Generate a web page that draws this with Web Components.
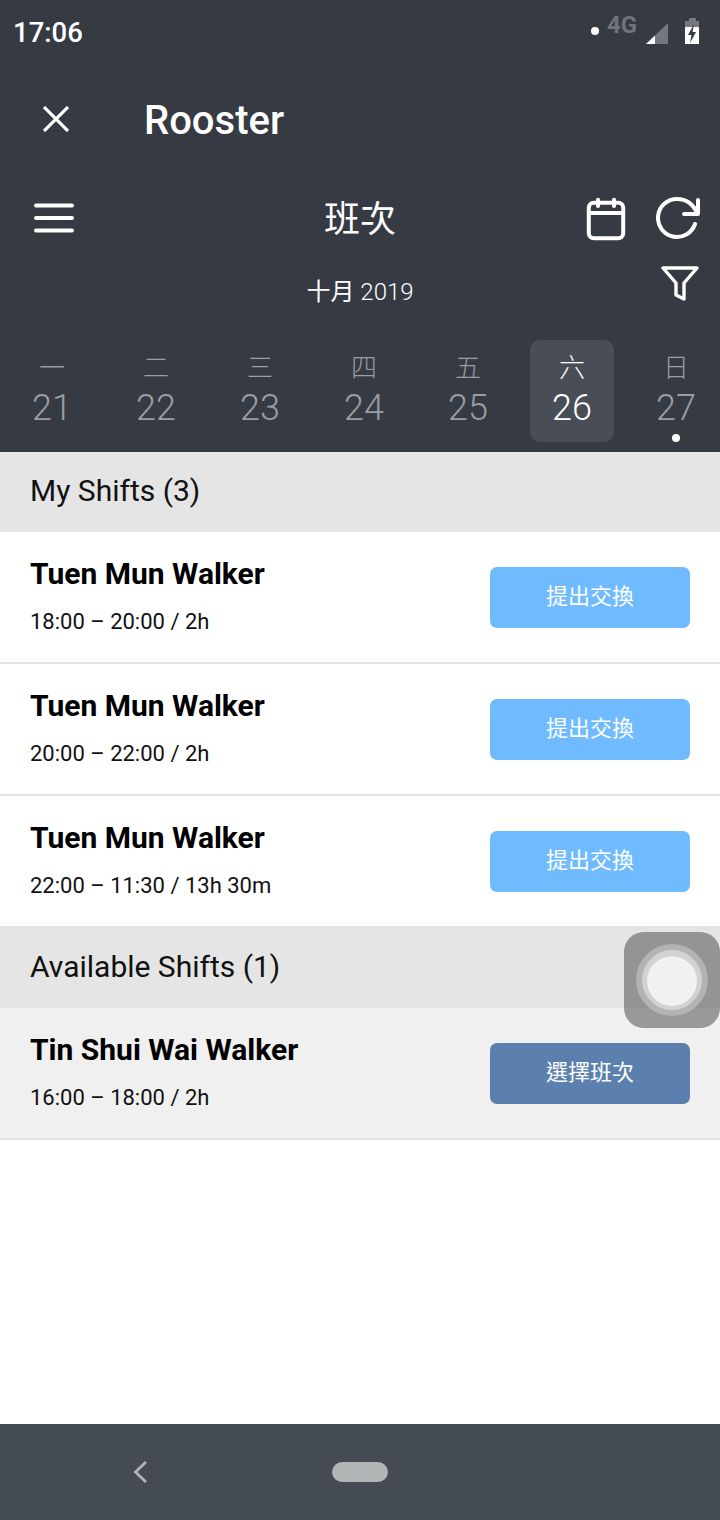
<!DOCTYPE html>
<html lang="zh-Hant"><head><meta charset="utf-8"><title>Rooster</title>
<style>
html,body{margin:0;padding:0;background:#fff}
body{width:720px;height:1520px;overflow:hidden;position:relative;font-family:Roboto,"Noto Sans CJK TC",sans-serif}
</style></head><body>
<app-shell>
  <status-bar></status-bar>
  <title-bar>Rooster</title-bar>
  <shift-header></shift-header>
  <section-head>My Shifts (3)</section-head>
  <shift-row name="Tuen Mun Walker" time="18:00 – 20:00 / 2h" action="提出交換"></shift-row>
  <shift-row name="Tuen Mun Walker" time="20:00 – 22:00 / 2h" action="提出交換"></shift-row>
  <shift-row name="Tuen Mun Walker" time="22:00 – 11:30 / 13h 30m" action="提出交換"></shift-row>
  <section-head>Available Shifts (1)</section-head>
  <shift-row available name="Tin Shui Wai Walker" time="16:00 – 18:00 / 2h" action="選擇班次"></shift-row>
  <nav-bar></nav-bar>
</app-shell>
<float-touch></float-touch>
<script>
function def(name, html, init){
  customElements.define(name, class extends HTMLElement{
    connectedCallback(){
      if(this.shadowRoot) return;
      const r=this.attachShadow({mode:'open'});
      r.innerHTML=typeof html==='function'?html(this):html;
      if(init) init(r,this);
    }
  });
}
def('app-shell',`<style>:host{display:flex;flex-direction:column;height:1520px}</style><slot></slot>`);
def('status-bar',`<style>
:host{display:flex;align-items:flex-start;justify-content:space-between;height:68px;background:#363a43;color:#fff;box-sizing:border-box;padding:17px 20px 0 13px}
.t{font:500 27.500px/32px Roboto,sans-serif}
.i{display:flex;position:relative;margin-top:-1px}
svg{display:block}
.g{position:absolute;left:19px;top:-4px;font:700 24px/26px Roboto,sans-serif;color:#6f737b}
</style><span class="t">17:06</span>
<div class="i"><svg width="112" height="32" viewBox="0 0 112 32">
<circle cx="7" cy="15" r="4" fill="#fff"/>
<path d="M58 28 L80 7 V28Z" fill="#747780"/><path d="M58 28 L67 19.500 V28Z" fill="#fff"/>
<path d="M101 5V2.500Q101 2 102 2H107Q108 2 108 2.500V5H111V28H97V5Z" fill="#747780"/>
<path d="M97 11H111V28H97Z" fill="#fff"/>
<path d="M106 8L100 19H103.500L102 27L108 16H104.500Z" fill="#363a43"/>
</svg><span class="g">4G</span></div>`);
def('title-bar',`<style>
:host{display:flex;align-items:center;height:105px;box-sizing:border-box;background:#363a43;border-bottom:1px solid #30343c}
svg{margin-left:43px;margin-bottom:3px;display:block;flex:none}
span{margin-left:75px;padding-top:2px;color:#fff;font:500 40px/44px Roboto,sans-serif}
</style><svg width="26" height="26" viewBox="0 0 26 26"><path d="M1 1L25 25M25 1L1 25" stroke="#fff" stroke-width="3.200" fill="none"/></svg><span><slot></slot></span>`);
def('shift-header',`<style>
:host{display:block;height:279px;background:#363a43;color:#fff;position:relative}
.top{display:flex;align-items:center;height:90px;padding:0 20px 0 34px;box-sizing:border-box}
.left{width:140px;display:flex;align-items:center}
.right{width:154px;display:flex;align-items:center;justify-content:flex-end;gap:29px;margin-top:2px}
h1{flex:1;margin:0;padding-top:4px;text-align:center;font:400 36px/44px Roboto,"Noto Sans CJK TC",sans-serif}
svg{display:block}
.mid{display:flex;align-items:center;justify-content:center;height:34px;margin-top:12px;position:relative;font:400 24px/34px Roboto,"Noto Sans CJK TC",sans-serif}
.mid b{font-weight:300}
.filter{position:absolute;right:21px;top:-9px}
.days{display:grid;grid-template-columns:repeat(7,104px);margin:31px 0 0 0}
</style>
<div class="top"><div class="left"><svg width="40" height="30" viewBox="0 0 40 30"><path d="M2 2.500H38M2 15H38M2 27.500H38" stroke="#fff" stroke-width="4" stroke-linecap="round" fill="none"/></svg></div>
<h1>班次</h1>
<div class="right"><svg width="42" height="44" viewBox="0 0 42 44" fill="none" stroke="#fff" stroke-width="4" stroke-linecap="round" stroke-linejoin="round"><rect x="3.800" y="5.800" width="34.400" height="35.400" rx="5"/><path d="M3.800 16H38.200M13 2.800V9M29 2.800V9"/></svg>
<svg width="44" height="44" viewBox="0 0 44 44" fill="none" stroke="#fff" stroke-width="4" stroke-linecap="round" stroke-linejoin="round"><path d="M42 3V17H28"/><path d="M41 16C37 7 30 2 21 2A19 19 0 1 0 39 27"/></svg></div></div>
<div class="mid"><span>十月 <b>2019</b></span>
<svg class="filter" width="38" height="36" viewBox="0 0 38 36" fill="none" stroke="#fff" stroke-width="3.400" stroke-linejoin="round" stroke-linecap="round"><path d="M2 2H36L23 17V33L15 29V17Z"/></svg></div>
<div class="days">
<day-cell w="一" d="21"></day-cell><day-cell w="二" d="22"></day-cell><day-cell w="三" d="23"></day-cell><day-cell w="四" d="24"></day-cell><day-cell w="五" d="25"></day-cell><day-cell w="六" d="26" active></day-cell><day-cell w="日" d="27" dot></day-cell>
</div>`);
def('day-cell',el=>`<style>
:host{display:flex;flex-direction:column;align-items:center;position:relative;height:102px;color:${el.hasAttribute('active')?'#fff':'#9a9da1'}}
.w{font:300 26px/28px Roboto,"Noto Sans CJK TC",sans-serif;margin-top:14px;position:relative}
.d{font:300 36px/44px Roboto,sans-serif;margin-top:4px;position:relative}
.bg{position:absolute;left:10px;top:0;width:84px;height:102px;border-radius:10px;background:#494d55}
.dot{position:absolute;left:50%;margin-left:-4px;top:94px;width:8px;height:8px;border-radius:50%;background:#fff}
</style>${el.hasAttribute('active')?'<div class="bg"></div>':''}<span class="w">${el.getAttribute('w')}</span><span class="d">${el.getAttribute('d')}</span>${el.hasAttribute('dot')?'<div class="dot"></div>':''}`);
def('section-head',`<style>
:host{display:flex;align-items:center;height:80px;box-sizing:border-box;padding:0 0 2px 30px;background:#e5e5e5;color:#111;font:400 30px/36px Roboto,sans-serif}
</style><slot></slot>`);
def('shift-row',el=>{const a=el.hasAttribute('available');return `<style>
:host{display:flex;align-items:flex-start;justify-content:space-between;height:132px;box-sizing:border-box;border-bottom:2px solid #e4e4e4;background:${a?'#f0f0f0':'#fff'};padding:0 30px}
.n{font:700 30px/36px Roboto,sans-serif;color:#000;margin-top:24px}
.t{font:400 22px/26px Roboto,sans-serif;color:#111;margin-top:17px}
.b{margin-top:35px;width:200px;height:61px;border-radius:7px;background:${a?'#5b80ae':'#70bbff'};color:#fff;display:flex;align-items:center;justify-content:center;font:400 22px/28px Roboto,"Noto Sans CJK TC",sans-serif;border:0;padding:0 0 2px}
</style><div><div class="n">${el.getAttribute('name')}</div><div class="t">${el.getAttribute('time')}</div></div><button class="b">${el.getAttribute('action')}</button>`});
def('nav-bar',`<style>
:host{display:block;position:absolute;left:0;right:0;top:1424px;height:96px;background:#454b52}
.in{display:flex;align-items:center;height:96px}
svg{display:block;margin-left:133px;flex:none}
.pill{margin-left:185px;width:56px;height:20px;border-radius:10px;background:#b2b5b6}
</style><div class="in"><svg width="14" height="22" viewBox="0 0 14 22"><path d="M13 1L2.500 11L13 21" stroke="#b2b5b6" stroke-width="2.800" fill="none"/></svg><div class="pill"></div></div>`);
def('float-touch',`<style>
:host{display:block;position:absolute;left:624px;top:932px;width:96px;height:96px;border-radius:20px;background:rgba(82,82,82,.55)}
.a,.b,.c{position:absolute;border-radius:50%}
.a{left:12px;top:12px;width:72px;height:72px;background:#b3b3b3}
.b{left:18px;top:18px;width:60px;height:60px;background:#d2d2d2}
.c{left:23px;top:24px;width:50px;height:50px;background:#f1f1f1}
</style><div class="a"></div><div class="b"></div><div class="c"></div>`);
</script>
</body></html>
